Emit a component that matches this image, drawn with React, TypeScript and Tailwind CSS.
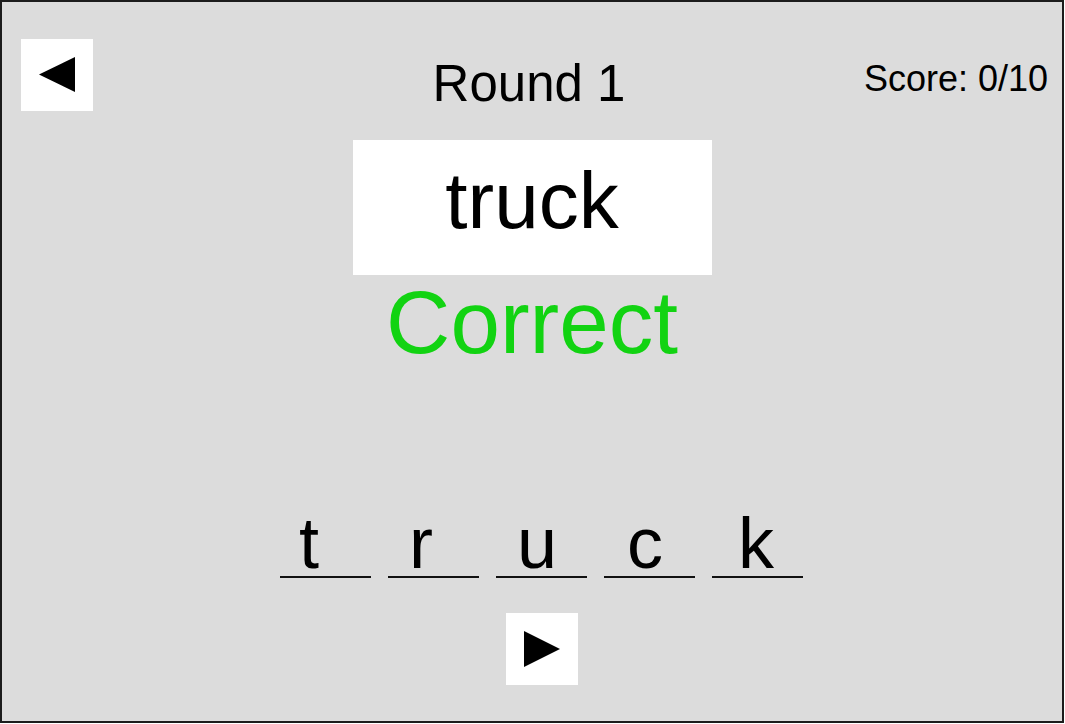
const letters = [
  { ch: 't', pad: 'pl-[19px]' },
  { ch: 'r', pad: 'pl-[21px]' },
  { ch: 'u', pad: 'pl-[21px]' },
  { ch: 'c', pad: 'pl-[23px]' },
  { ch: 'k', pad: 'pl-[26px]' },
];

function Triangle({ dir }: { dir: 'left' | 'right' }) {
  return (
    <svg width="36" height="36" viewBox="0 0 36 36">
      {dir === 'left' ? (
        <polygon points="0,17.5 36,0 36,35" fill="#000" />
      ) : (
        <polygon points="0,0 0,36 36,18" fill="#000" />
      )}
    </svg>
  );
}

export default function App() {
  return (
    <div
      className="w-[1064px] h-[723px] border-2 border-[#1c1c1c] bg-[#dcdcdc] text-black flex flex-col items-center pt-[37px]"
      style={{ fontFamily: '"Liberation Sans", Arial, sans-serif' }}
    >
      {/* Header */}
      <div className="w-full h-[72px] grid grid-cols-[1fr_auto_1fr] items-start pl-[19px] pr-[14px]">
        <button className="w-[72px] h-[72px] bg-white flex items-center justify-center">
          <Triangle dir="left" />
        </button>
        <h1 className="mt-[19px] text-[51px] leading-none pr-[11px]">Round 1</h1>
        <div className="justify-self-end mt-[22px] text-[36px] leading-none">Score: 0/10</div>
      </div>

      {/* Word card */}
      <div className="mt-[29px] w-[359px] h-[135px] bg-white flex justify-center pt-[21px]">
        <span className="text-[80px] leading-none">truck</span>
      </div>

      <div className="mt-[3px] text-[89px] leading-none text-[#12d312]">Correct</div>

      {/* Spelled letters */}
      <div className="mt-[144px] flex gap-[17px] pl-[19px]">
        {letters.map((l, i) => (
          <div
            key={i}
            className={`w-[91px] border-b-2 border-[#111] text-[72px] leading-[65px] ${l.pad}`}
          >
            {l.ch}
          </div>
        ))}
      </div>

      <div className="mt-[35px] pl-[19px]">
        <button className="w-[72px] h-[72px] bg-white flex items-center justify-center">
          <Triangle dir="right" />
        </button>
      </div>
    </div>
  );
}
